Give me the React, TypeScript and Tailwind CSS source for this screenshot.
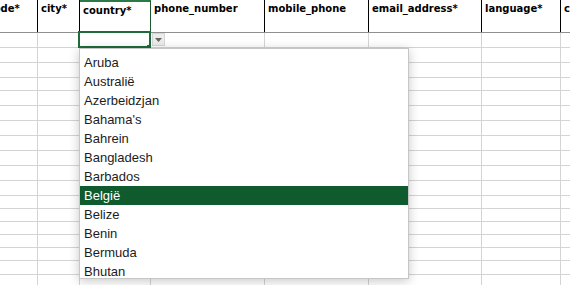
const columns = [
  { label: "postcode*", w: "w-[78px]" },
  { label: "city*", w: "w-[42px]" },
  { label: "country*", w: "w-[71px]" },
  { label: "phone_number", w: "w-[114px]" },
  { label: "mobile_phone", w: "w-[104px]" },
  { label: "email_address*", w: "w-[113px]" },
  { label: "language*", w: "w-[79px]" },
  { label: "comments", w: "w-[100px]" },
]

// row heights include the 1px grid line at the bottom
const rowHeights = [
  "h-[15px]", "h-[15px]", "h-[15px]", "h-[13px]", "h-[15px]", "h-[15px]",
  "h-[15px]", "h-[15px]", "h-[15px]", "h-[15px]", "h-[15px]", "h-[13px]",
  "h-[13px]", "h-[13px]", "h-[13px]", "h-[13px]", "h-[14px]", "h-[13px]",
]

const countries = [
  "Aruba",
  "Australië",
  "Azerbeidzjan",
  "Bahama's",
  "Bahrein",
  "Bangladesh",
  "Barbados",
  "België",
  "Belize",
  "Benin",
  "Bermuda",
  "Bhutan",
]

export default function App() {
  return (
    <div className="relative h-[285px] w-[570px] overflow-hidden bg-white">
      <div className="-ml-[40px] flex flex-col">
        {/* header row */}
        <div className="flex h-[33px] border-b border-[#8f8f8f]">
          {columns.map((c, i) => (
            <div
              key={c.label}
              className={`${c.w} shrink-0 overflow-hidden whitespace-nowrap border-r ${
                i === 2 ? "border-r-[#1d5a33] border-t-2 border-t-[#2a7a48]" : "border-black"
              } pl-[3px] pt-[2px] font-['DejaVu_Sans',sans-serif] text-[10px] font-bold leading-[14px] text-black`}
            >
              {c.label}
            </div>
          ))}
        </div>
        {rowHeights.map((h, r) => (
          <div key={r} className={`flex ${h} border-b border-[#d4d4d4]`}>
            {columns.map((c) => (
              <div key={c.label} className={`${c.w} shrink-0 border-r border-[#d4d4d4]`} />
            ))}
          </div>
        ))}
      </div>

      {/* selected cell */}
      <div className="absolute left-[78px] top-[31px] h-[17px] w-[73px] border-2 border-[#1f6b3d]" />
      <div className="absolute left-[147px] top-[45px] size-[4px] bg-[#1f6b3d]" />

      {/* dropdown arrow */}
      <div className="absolute left-[152px] top-[33px] flex h-[13px] w-[13px] items-center justify-center border border-[#d6d6d6] bg-[#ececec]">
        <svg width="7" height="4" viewBox="0 0 7 4">
          <path d="M0 0h7L3.5 4z" fill="#666" />
        </svg>
      </div>

      {/* list */}
      <ul className="absolute left-[79px] top-[48px] h-[231px] w-[330px] overflow-hidden border border-[#c6c6c6] bg-white pt-[4px] shadow-[0_2px_10px_rgba(0,0,0,0.22)] font-['Liberation_Sans',Arial,sans-serif] text-[13px] leading-[19px] text-[#1c1c1c]">
        {countries.map((name) => {
          const active = name === "België"
          return (
            <li
              key={name}
              className={`h-[19px] pl-[4px] ${active ? "bg-[#0f5b2d] text-white" : ""}`}
            >
              {name}
            </li>
          )
        })}
      </ul>
    </div>
  )
}
